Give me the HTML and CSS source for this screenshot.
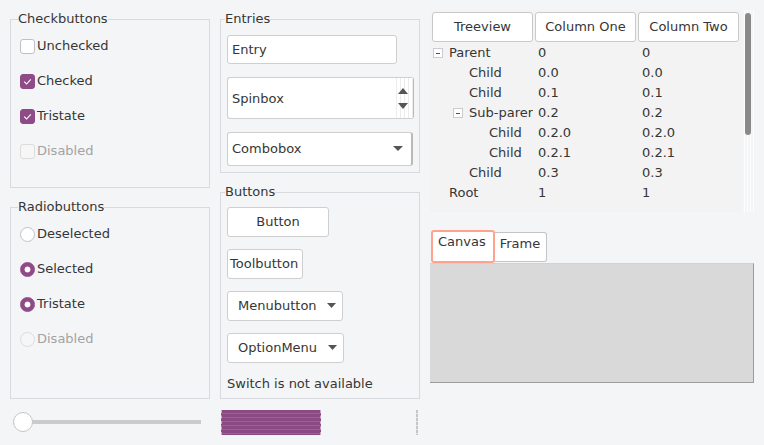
FILE: index.html
```html
<!DOCTYPE html>
<html>
<head>
<meta charset="utf-8">
<link rel="stylesheet" href="styles.css">
</head>
<body>
<div class="app">
  <div class="col col-a">
    <fieldset class="group checks">
      <legend>Checkbuttons</legend>
      <div class="opts">
        <div class="opt"><span class="box"></span>Unchecked</div>
        <div class="opt"><span class="box on"><svg width="13" height="13" viewBox="0 0 13 13"><path d="M3.2 6.6 L5.6 9 L9.8 4.4" fill="none" stroke="#fff" stroke-width="1.1"/></svg></span>Checked</div>
        <div class="opt"><span class="box on"><svg width="13" height="13" viewBox="0 0 13 13"><path d="M3.2 6.6 L5.6 9 L9.8 4.4" fill="none" stroke="#fff" stroke-width="1.1"/></svg></span>Tristate</div>
        <div class="opt disabled"><span class="box"></span>Disabled</div>
      </div>
    </fieldset>
    <fieldset class="group radios">
      <legend>Radiobuttons</legend>
      <div class="opts">
        <div class="opt"><span class="dot"></span>Deselected</div>
        <div class="opt"><span class="dot on"></span>Selected</div>
        <div class="opt"><span class="dot on"></span>Tristate</div>
        <div class="opt disabled"><span class="dot"></span>Disabled</div>
      </div>
    </fieldset>
    <div class="scale"><span class="thumb"></span></div>
  </div>

  <div class="col col-b">
    <fieldset class="group entries">
      <legend>Entries</legend>
      <div class="field entry">Entry</div>
      <div class="field spin">
        <span class="ftext">Spinbox</span>
        <span class="spin-arrows">
          <svg width="10" height="6" viewBox="0 0 10 6"><path d="M0 6 L5 0 L10 6 Z" fill="#555"/></svg>
          <svg width="10" height="6" viewBox="0 0 10 6"><path d="M0 0 L10 0 L5 6 Z" fill="#555"/></svg>
        </span>
      </div>
      <div class="field combo">
        <span class="ftext">Combobox</span>
        <svg class="caret" width="10" height="5" viewBox="0 0 10 5"><path d="M0 0 L10 0 L5 5 Z" fill="#555"/></svg>
      </div>
    </fieldset>
    <fieldset class="group buttons">
      <legend>Buttons</legend>
      <div class="btn b-button">Button</div>
      <div class="btn b-tool">Toolbutton</div>
      <div class="btn b-menu">Menubutton<svg class="caret" width="9" height="5" viewBox="0 0 9 5"><path d="M0 0 L9 0 L4.5 5 Z" fill="#555"/></svg></div>
      <div class="btn b-menu b-opt">OptionMenu<svg class="caret" width="9" height="5" viewBox="0 0 9 5"><path d="M0 0 L9 0 L4.5 5 Z" fill="#555"/></svg></div>
      <div class="note">Switch is not available</div>
    </fieldset>
    <div class="bottom-b">
      <div class="progress"></div>
      <div class="vsep"></div>
    </div>
  </div>

  <div class="col col-c">
    <div class="tree">
      <div class="tree-body">
        <div class="heads">
          <div class="head">Treeview</div>
          <div class="head">Column One</div>
          <div class="head">Column Two</div>
        </div>
        <div class="row"><div class="c0 l0"><span class="tog"></span><span class="lbl">Parent</span></div><div class="c1">0</div><div class="c2">0</div></div>
        <div class="row"><div class="c0 l1"><span class="slot"></span><span class="lbl">Child</span></div><div class="c1">0.0</div><div class="c2">0.0</div></div>
        <div class="row"><div class="c0 l1"><span class="slot"></span><span class="lbl">Child</span></div><div class="c1">0.1</div><div class="c2">0.1</div></div>
        <div class="row"><div class="c0 l1"><span class="tog"></span><span class="lbl">Sub-parent</span></div><div class="c1">0.2</div><div class="c2">0.2</div></div>
        <div class="row"><div class="c0 l2"><span class="slot"></span><span class="lbl">Child</span></div><div class="c1">0.2.0</div><div class="c2">0.2.0</div></div>
        <div class="row"><div class="c0 l2"><span class="slot"></span><span class="lbl">Child</span></div><div class="c1">0.2.1</div><div class="c2">0.2.1</div></div>
        <div class="row"><div class="c0 l1"><span class="slot"></span><span class="lbl">Child</span></div><div class="c1">0.3</div><div class="c2">0.3</div></div>
        <div class="row"><div class="c0 l0"><span class="slot"></span><span class="lbl">Root</span></div><div class="c1">1</div><div class="c2">1</div></div>
      </div>
      <div class="vscroll"><span class="vthumb"></span></div>
    </div>
    <div class="notebook">
      <div class="tabs">
        <div class="tab active">Canvas</div>
        <div class="tab">Frame</div>
      </div>
      <div class="panel"></div>
    </div>
  </div>
</div>
</body>
</html>
```
FILE: styles.css
```css
* { box-sizing: border-box; }

html, body {
  margin: 0;
  width: 764px;
  height: 445px;
  overflow: hidden;
  background: #f4f5f7;
  font-family: "DejaVu Sans", "Noto Sans", sans-serif;
  font-size: 13px;
  color: #363636;
}

.app {
  display: flex;
  gap: 10px;
  padding: 10px 0 0 10px;
}

.col { display: flex; flex-direction: column; }
.col-a, .col-b { width: 200px; padding-top: 2px; }
.col-c { width: 324px; }

/* label frames */
.group {
  margin: 0;
  min-width: 0;
  border: 1px solid #d9dadd;
  padding: 9px 9px 0 9px;
}
.group legend {
  padding: 0 0 2px 0;
  margin-left: -2px;
  line-height: 13px;
}
.checks { height: 176px; }
.radios { height: 199px; margin-top: 12px; }
.entries { height: 161px; padding-top: 8px; padding-left: 6px; }
.buttons { height: 214px; margin-top: 12px; padding-top: 7px; padding-left: 6px; }

/* check / radio options */
.opts { display: flex; flex-direction: column; gap: 15px; }
.opt {
  display: flex;
  align-items: center;
  gap: 2px;
  height: 20px;
  line-height: 20px;
}
.opt.disabled { color: #a3a3a3; }

.box {
  width: 15px;
  height: 15px;
  border: 1px solid #bfc0c2;
  border-radius: 3px;
  background: #fff;
  display: flex;
  align-items: center;
  justify-content: center;
}
.box.on { background: #8f4b87; border-color: #8f4b87; }
.disabled .box { border-color: #dcdcdc; background: #f6f6f7; }

.dot {
  width: 15px;
  height: 15px;
  border-radius: 50%;
  border: 1px solid #c2c3c5;
  background: #fff;
}
.dot.on {
  border-color: #8f4b87;
  background: radial-gradient(circle, #fff 0 2.6px, #8f4b87 3.3px);
}
.disabled .dot { border-color: #dcdcdc; background: #f6f6f7; }

/* scale */
.scale {
  margin-top: 12px;
  margin-left: 3px;
  width: 189px;
  height: 21px;
  display: flex;
  align-items: center;
  background: linear-gradient(#cbcbcb, #cbcbcb) no-repeat 0 50% / 188px 4px;
  border-radius: 2px;
}
.thumb {
  width: 20px;
  height: 20px;
  border-radius: 50%;
  background: #fff;
  border: 1px solid #c6c6c6;
}

/* entries */
.field {
  background: #fff;
  border: 1px solid #cfcfcf;
  border-radius: 3px;
  display: flex;
  align-items: center;
  padding-left: 4px;
}
.entry { width: 170px; height: 29px; }
.spin { width: 187px; height: 42px; margin-top: 13px; border-right-color: #b9b9b9; }
.combo { width: 186px; height: 34px; margin-top: 13px; border-right: 2px solid #b9b9b9; padding-bottom: 1px; }
.ftext { flex: 1; }
.spin-arrows {
  width: 20px;
  align-self: stretch;
  display: flex;
  flex-direction: column;
  justify-content: space-around;
  align-items: center;
  padding: 5px 0;
  background: repeating-linear-gradient(90deg, #fff 0 3px, #ececec 3px 4px);
}
.combo .caret { margin-right: 8px; }

/* buttons */
.btn {
  height: 30px;
  background: #fff;
  border: 1px solid #cfcfcf;
  border-radius: 3px;
  display: flex;
  align-items: center;
  padding-bottom: 1px;
}
.b-button { width: 102px; justify-content: center; }
.b-tool { width: 76px; margin-top: 12px; padding-left: 2px; }
.b-menu { width: 116px; margin-top: 12px; padding-left: 10px; }
.b-menu .caret { margin-left: auto; margin-right: 6px; }
.b-opt { width: 117px; }
.note { margin-top: 13px; line-height: 15px; }

/* bottom of column b */
.bottom-b {
  margin-top: 11px;
  display: flex;
  align-items: flex-start;
}
.progress {
  margin-left: 1px;
  width: 100px;
  height: 25px;
  background: repeating-linear-gradient(180deg, #8c4a84 0 3px, #9d6096 3px 4px);
  border-left: 1px dashed #c9a9c4;
  border-right: 1px dashed #c9a9c4;
}
.vsep {
  margin-left: auto;
  margin-right: 2px;
  width: 2px;
  height: 25px;
  background: repeating-linear-gradient(180deg, #c6c6c6 0 3px, #e6e6e6 3px 4px);
}

/* treeview */
.tree { display: flex; height: 202px; }
.tree-body {
  width: 312px;
  background: #f3f3f3;
  padding: 2px 0 0 2px;
  overflow: hidden;
}
.heads, .row {
  display: grid;
  grid-template-columns: 101px 101px 101px;
  column-gap: 2px;
}
.heads { margin-bottom: 1px; }
.head {
  height: 30px;
  background: #fff;
  border: 1px solid #c9c9c9;
  border-radius: 3px;
  display: flex;
  align-items: center;
  justify-content: center;
  padding-bottom: 1px;
}
.row { height: 20px; line-height: 20px; white-space: nowrap; }
.c0 { overflow: hidden; display: flex; align-items: center; padding-left: 1px; }
.c0.l1 { padding-left: 21px; }
.c0.l2 { padding-left: 41px; }
.c1 { padding-left: 3px; }
.c2 { padding-left: 4px; }
.slot { width: 16px; flex: none; }
.tog {
  flex: none;
  width: 10px;
  height: 10px;
  margin-right: 6px;
  border: 1px solid #c9cbd0;
  background: #fff linear-gradient(#555, #555) no-repeat 50% 50% / 4px 1px;
}
.vscroll {
  width: 12px;
  padding: 3px 0 0 3px;
  background: repeating-linear-gradient(90deg, transparent 0 2px, #fdfdfd 2px 3px);
}
.vthumb {
  display: block;
  width: 6px;
  height: 122px;
  border-radius: 3px;
  background: #8a8a8a;
}

/* notebook */
.notebook { margin-top: 18px; }
.tabs { display: flex; align-items: flex-start; height: 33px; }
.tab {
  background: #fff;
  line-height: 15px;
}
.tab.active {
  margin-left: 1px;
  height: 33px;
  border: 2px solid #ffa28e;
  border-radius: 3px;
  padding: 2px 7px 0 5px;
}
.tab:not(.active) {
  margin-top: 2px;
  height: 30px;
  border: 1px solid #c4c4c4;
  border-left: none;
  border-radius: 0 3px 3px 0;
  padding: 3px 6px 0 5px;
}
.panel {
  width: 324px;
  height: 120px;
  background: #d9d9d9;
  border-top: 1px solid #d2d2d2;
  border-right: 1px solid #9c9c9c;
  border-bottom: 1px solid #9c9c9c;
}
```
